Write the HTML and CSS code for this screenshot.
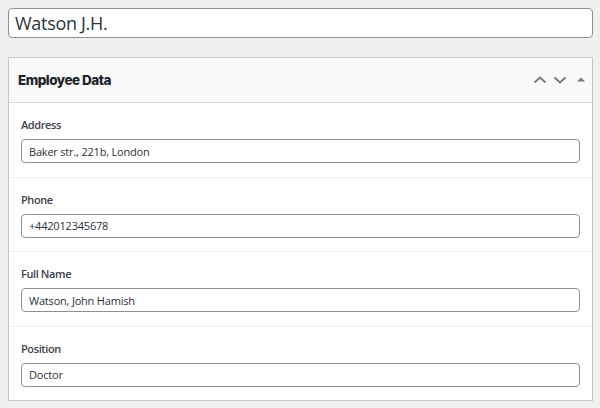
FILE: index.html
```html
<!DOCTYPE html>
<html>
<head>
<meta charset="utf-8">
<link rel="stylesheet" href="styles.css">
</head>
<body>
<div class="page">
  <input class="title-input" type="text" value="Watson J.H.">
  <section class="panel">
    <header class="panel-head">
      <h2 class="panel-title">Employee Data</h2>
      <div class="panel-actions">
        <svg class="ico" width="20" height="20" viewBox="0 0 20 20"><path d="M4.5 12.5 L10 7.5 L15.5 12.5" fill="none" stroke="#787c82" stroke-width="2"/></svg>
        <svg class="ico" width="20" height="20" viewBox="0 0 20 20"><path d="M4.5 7.5 L10 12.5 L15.5 7.5" fill="none" stroke="#787c82" stroke-width="2"/></svg>
        <svg class="ico tri" width="10" height="20" viewBox="0 0 10 20"><path d="M1 11.5 L5 7.5 L9 11.5 Z" fill="#787c82"/></svg>
      </div>
    </header>
    <div class="row">
      <label class="lbl">Address</label>
      <input class="fld" type="text" value="Baker str., 221b, London">
    </div>
    <div class="row">
      <label class="lbl">Phone</label>
      <input class="fld" type="text" value="+442012345678">
    </div>
    <div class="row">
      <label class="lbl">Full Name</label>
      <input class="fld" type="text" value="Watson, John Hamish">
    </div>
    <div class="row last">
      <label class="lbl">Position</label>
      <input class="fld" type="text" value="Doctor">
    </div>
  </section>
</div>
</body>
</html>
```

FILE: styles.css
```css
html, body {
  margin: 0;
  padding: 0;
  background: #f0f0f1;
}
body {
  padding: 8px;
  font-family: "Open Sans", "Noto Sans", sans-serif;
  color: #1d2327;
}
.page {
  display: flex;
  flex-direction: column;
  width: 585px;
}
.title-input {
  box-sizing: border-box;
  width: 100%;
  height: 30px;
  margin: 0;
  padding: 0 6px;
  border: 1px solid #8c8f94;
  border-radius: 4px;
  background: #fff;
  font-family: "Open Sans", "Noto Sans", sans-serif;
  font-size: 18px;
  letter-spacing: -0.3px;
  color: #2c3338;
  outline: none;
}
.panel {
  margin-top: 19px;
  border: 1px solid #c3c4c7;
  background: #fff;
  display: flex;
  flex-direction: column;
}
.panel-head {
  height: 45px;
  box-sizing: border-box;
  border-bottom: 1px solid #dcdcde;
  background: #f9f9f9;
  display: flex;
  align-items: center;
  justify-content: space-between;
  padding: 0 6px 0 9px;
}
.panel-title {
  margin: 0;
  font-family: "Inter", sans-serif;
  font-weight: 800;
  font-size: 13.5px;
  letter-spacing: -0.5px;
  color: #1d2327;
}
.panel-actions {
  display: flex;
  align-items: center;
}
.ico {
  display: block;
}
.tri {
  margin-left: 6px;
}
.row {
  display: flex;
  flex-direction: column;
  padding: 12px 12px 13.5px 12px;
  border-bottom: 1px solid #f0f0f1;
}
.row.last {
  border-bottom: none;
}
.lbl {
  font-size: 11px;
  font-weight: 600;
  letter-spacing: -0.4px;
  line-height: 20px;
  color: #3c434a;
  margin-bottom: 4px;
}
.fld {
  box-sizing: border-box;
  width: 100%;
  height: 24px;
  margin: 0;
  padding: 0 7px;
  border: 1px solid #8c8f94;
  border-radius: 4px;
  background: #fff;
  font-family: "Open Sans", "Noto Sans", sans-serif;
  font-size: 11px;
  letter-spacing: -0.2px;
  color: #2c3338;
  outline: none;
}
```
